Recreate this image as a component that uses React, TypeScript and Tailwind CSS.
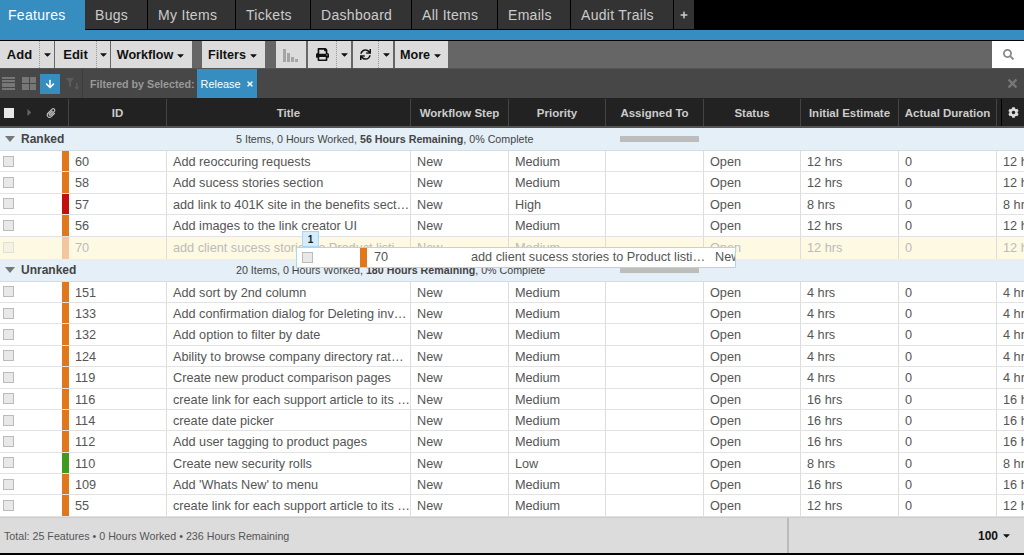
import { FaCaretDown, FaCog, FaPaperclip, FaPlus, FaPrint, FaSearch, FaSync, FaTimes, FaCaretRight, FaArrowDown } from 'react-icons/fa';

const tabs = [
  { label: 'Bugs', w: 'w-[63px]' },
  { label: 'My Items', w: 'w-[88px]' },
  { label: 'Tickets', w: 'w-[75px]' },
  { label: 'Dashboard', w: 'w-[101px]' },
  { label: 'All Items', w: 'w-[86px]' },
  { label: 'Emails', w: 'w-[73px]' },
  { label: 'Audit Trails', w: 'w-[103px]' },
];

const columns = 'grid grid-cols-[62px_7px_98px_244px_98px_97px_98px_97px_98px_98px_98px]';

interface Row {
  id: number;
  title: string;
  priority?: string;
  estimate: string;
  color?: string;
}

const ranked: Row[] = [
  { id: 60, title: 'Add reoccuring requests', estimate: '12 hrs' },
  { id: 58, title: 'Add sucess stories section', estimate: '12 hrs' },
  { id: 57, title: 'add link to 401K site in the benefits section of the site', priority: 'High', estimate: '8 hrs', color: 'bg-[#c40f0f]' },
  { id: 56, title: 'Add images to the link creator UI', estimate: '12 hrs' },
];

const unranked: Row[] = [
  { id: 151, title: 'Add sort by 2nd column', estimate: '4 hrs' },
  { id: 133, title: 'Add confirmation dialog for Deleting inventory items', estimate: '4 hrs' },
  { id: 132, title: 'Add option to filter by date', estimate: '4 hrs' },
  { id: 124, title: 'Ability to browse company directory rather than search', estimate: '4 hrs' },
  { id: 119, title: 'Create new product comparison pages', estimate: '4 hrs' },
  { id: 116, title: 'create link for each support article to its own page', estimate: '16 hrs' },
  { id: 114, title: 'create date picker', estimate: '16 hrs' },
  { id: 112, title: 'Add user tagging to product pages', estimate: '16 hrs' },
  { id: 110, title: 'Create new security rolls', priority: 'Low', estimate: '8 hrs', color: 'bg-[#3f9a1e]' },
  { id: 109, title: "Add 'Whats New' to menu", estimate: '16 hrs' },
  { id: 55, title: 'create link for each support article to its own page', estimate: '12 hrs' },
];

function Checkbox() {
  return <span className="block h-[11px] w-[11px] border border-[#bbb] bg-[#e8e8e8]" />;
}

function Cell({ children }: { children: React.ReactNode }) {
  return <div className="truncate border-r border-[#ddd] pl-[6px] leading-[22px]">{children}</div>;
}

function ItemRow({ row }: { row: Row }) {
  return (
    <div className={`${columns} h-[21.4px] border-b border-[#e2e2e2] bg-white`}>
      <div className="flex items-center pl-[3px]"><Checkbox /></div>
      <div className={row.color ?? 'bg-[#e0771a]'} />
      <Cell>{row.id}</Cell>
      <Cell>{row.title}</Cell>
      <Cell>New</Cell>
      <Cell>{row.priority ?? 'Medium'}</Cell>
      <Cell>{''}</Cell>
      <Cell>Open</Cell>
      <Cell>{row.estimate}</Cell>
      <Cell>0</Cell>
      <Cell>{row.estimate}</Cell>
    </div>
  );
}

function GroupRow({ name, items, remaining }: { name: string; items: string; remaining: string }) {
  return (
    <div className="flex h-[23px] items-center border-b border-[#d5dde3] bg-[#e4eff7] text-[#444]">
      <span className="ml-[5px] h-0 w-0 border-x-[5px] border-t-[6px] border-x-transparent border-t-[#777]" />
      <span className="ml-[6px] w-[215px] text-[12px] font-bold">{name}</span>
      <span className="w-[384px] text-[10.7px]">
        {items} Items, 0 Hours Worked, <b>{remaining} Hours Remaining</b>, 0% Complete
      </span>
      <span className="h-[6px] w-[79px] bg-[#bdbdbd]" />
    </div>
  );
}

function ToolButton({ label, w }: { label: string; w: string }) {
  return (
    <div className={`flex ${w} items-center justify-center gap-[2px] bg-[#dcdcdc] pt-px text-[12.6px] font-bold text-[#111]`}>
      {label}
      <FaCaretDown className="text-[11px]" />
    </div>
  );
}

function CaretButton({ w }: { w: string }) {
  return (
    <div className={`flex ${w} items-center justify-center border-l border-dotted border-[#999] bg-[#dcdcdc] text-[#111]`}>
      <FaCaretDown className="text-[11px]" />
    </div>
  );
}

function HeaderCell({ children }: { children: React.ReactNode }) {
  return (
    <div className="flex items-center justify-center border-r border-[#444] pt-[2px] text-[11.5px] font-bold whitespace-nowrap text-[#ccc]">
      {children}
    </div>
  );
}

export default function App() {
  return (
    <div className="flex h-[555px] w-[1024px] flex-col overflow-hidden bg-black font-['Liberation_Sans',Arial,sans-serif] text-[12.7px] text-[#555]">
      {/* Tabs */}
      <div className="flex h-[30px] shrink-0 bg-black text-[14px] tracking-[0.3px] text-[#ccc]">
        <div className="flex w-[85px] items-center bg-[#368dbf] pl-[8px] text-white">Features</div>
        {tabs.map((t) => (
          <div key={t.label} className={`flex ${t.w} mb-px items-center border-r border-black bg-[#333] pt-px pl-[10px]`}>
            {t.label}
          </div>
        ))}
        <div className="mb-px flex w-[20px] items-center justify-center bg-[#333]">
          <FaPlus className="text-[8px]" />
        </div>
      </div>
      <div className="h-[10px] shrink-0 bg-[#368dbf]" />
      <div className="h-px shrink-0 bg-black" />

      {/* Toolbar */}
      <div className="flex h-[27px] shrink-0 bg-[#666]">
        <div className="flex gap-0">
          <div className="flex w-[39px] items-center justify-center bg-[#dcdcdc] text-[13px] font-bold text-[#111]">Add</div>
          <CaretButton w="w-[15px]" />
          <div className="ml-px flex w-[41px] items-center justify-center bg-[#dcdcdc] text-[13px] font-bold text-[#111]">Edit</div>
          <CaretButton w="w-[14px]" />
          <div className="ml-px flex">
            <ToolButton label="Workflow" w="w-[81px]" />
          </div>
        </div>
        <div className="ml-[10px] flex">
          <ToolButton label="Filters" w="w-[63px]" />
        </div>
        <div className="ml-[11px] flex">
          <div className="flex w-[30px] items-center justify-center bg-[#dcdcdc]">
            <svg width="16" height="14" viewBox="0 0 16 14" fill="#a5a5a5">
              <rect x="0" y="1" width="3" height="13" />
              <rect x="4" y="5" width="3" height="9" />
              <rect x="8" y="9" width="3" height="5" />
              <rect x="12" y="11" width="3" height="3" />
            </svg>
          </div>
          <div className="ml-[2px] flex w-[28px] items-center justify-center bg-[#dcdcdc] text-[#111]">
            <FaPrint className="text-[13px]" />
          </div>
          <CaretButton w="w-[15px]" />
          <div className="ml-[2px] flex w-[25px] items-center justify-center bg-[#dcdcdc] text-[#111]">
            <FaSync className="text-[11px]" />
          </div>
          <CaretButton w="w-[15px]" />
          <div className="ml-[2px] flex">
            <ToolButton label="More" w="w-[53px]" />
          </div>
        </div>
        <div className="ml-auto flex w-[32px] items-center justify-center bg-white text-[#888]">
          <FaSearch className="text-[11px]" />
        </div>
      </div>

      {/* Filter bar */}
      <div className="flex h-[31px] shrink-0 items-stretch border-t border-[#555] border-b border-b-[#222] bg-[#474747]">
        <div className="flex w-[83px] items-center border-r border-[#3c3c3c] pl-[2px]">
          <div className="flex h-[13px] w-[13px] flex-col justify-between">
            {[0, 1, 2, 3, 4].map((i) => (
              <span key={i} className="block h-[2px] bg-[#777]" />
            ))}
          </div>
          <div className="ml-[7px] grid h-[13px] w-[14px] grid-cols-2 gap-px">
            {[0, 1, 2, 3].map((i) => (
              <span key={i} className="bg-[#777]" />
            ))}
          </div>
          <div className="ml-[4px] flex h-[20px] w-[20px] items-center justify-center bg-[#368dbf] text-white">
            <FaArrowDown className="text-[10px]" />
          </div>
          <svg className="ml-[6px]" width="13" height="12" viewBox="0 0 13 12" fill="#5c5c5c">
            <path d="M0 0h8L5 4v5L3 8V4zM10 5h1.5v4H13l-2.2 3-2.3-3H10z" />
          </svg>
        </div>
        <div className="ml-[7px] flex items-center pt-px text-[10.7px] font-bold text-[#999]">Filtered by Selected:</div>
        <div className="ml-[2px] flex w-[60px] items-center gap-[5px] bg-[#368dbf] pt-px pl-[4px] text-[10.9px] text-white">
          Release
          <FaTimes className="text-[8px]" />
        </div>
        <div className="ml-auto flex w-[32px] items-center justify-center pl-[9px] text-[#777]">
          <FaTimes className="text-[13px]" />
        </div>
      </div>

      {/* Column headers */}
      <div className={`${columns} h-[29px] shrink-0 border-b-2 border-[#555] bg-[#222]`}>
        <div className="col-span-2 flex items-center border-r border-[#444] pl-[4px] text-[#999]">
          <span className="block h-[10px] w-[10px] bg-[#e8e8e8]" />
          <FaCaretRight className="ml-[10px] text-[11px] text-[#666]" />
          <FaPaperclip className="ml-[11px] text-[10px] text-[#bbb]" />
        </div>
        <HeaderCell>ID</HeaderCell>
        <HeaderCell>Title</HeaderCell>
        <HeaderCell>Workflow Step</HeaderCell>
        <HeaderCell>Priority</HeaderCell>
        <HeaderCell>Assigned To</HeaderCell>
        <HeaderCell>Status</HeaderCell>
        <HeaderCell>Initial Estimate</HeaderCell>
        <HeaderCell>Actual Duration</HeaderCell>
        <div className="ml-[4px] flex w-[23px] items-center justify-center border-l border-black text-[#ddd]">
          <FaCog className="text-[11px]" />
        </div>
      </div>

      {/* Table body */}
      <div className="relative h-[389px] shrink-0 overflow-hidden bg-white">
        <GroupRow name="Ranked" items="5" remaining="56" />
        {ranked.map((r) => (
          <ItemRow key={r.id} row={r} />
        ))}
        <div className={`${columns} h-[22px] bg-[#fdf9e3] text-[#bbb]`}>
          <div className="flex items-center pl-[3px] opacity-40"><Checkbox /></div>
          <div className="bg-[#f4c6a0]" />
          <Cell>70</Cell>
          <Cell>add client sucess stories to Product listing page</Cell>
          <Cell>New</Cell>
          <Cell>Medium</Cell>
          <Cell>{''}</Cell>
          <Cell>Open</Cell>
          <Cell>12 hrs</Cell>
          <Cell>0</Cell>
          <Cell>12 hrs</Cell>
        </div>
        <GroupRow name="Unranked" items="20" remaining="180" />
        {unranked.map((r) => (
          <ItemRow key={r.id} row={r} />
        ))}

        {/* Row being dragged */}
        <div className="absolute top-[103px] left-[302px] flex h-[16px] w-[17px] items-center justify-center border border-[#a8d8f5] bg-[#d4ecfb] text-[10px] font-bold text-[#222]">
          1
        </div>
        <div className="absolute top-[119px] left-[296px] flex h-[21px] w-[440px] items-stretch overflow-hidden border border-[#a8d8f5] bg-white">
          <div className="flex w-[63px] shrink-0 items-center pl-[5px]"><Checkbox /></div>
          <div className="w-[7px] shrink-0 bg-[#e0771a]" />
          <div className="w-[104px] shrink-0 pl-[7px] leading-[19px]">70</div>
          <div className="w-[244px] shrink-0 truncate pr-[8px] leading-[19px]">add client sucess stories to Product listing page</div>
          <div className="shrink-0 leading-[19px]">New</div>
        </div>
      </div>

      {/* Footer */}
      <div className="flex h-[36px] shrink-0 items-center border-t border-[#ccc] bg-[#dcdcdc] text-[10.7px] text-[#555]">
        <div className="flex h-full w-[789px] items-center border-r-2 border-[#bbb] pt-px pl-[4px]">
          Total: 25 Features • 0 Hours Worked • 236 Hours Remaining
        </div>
        <div className="ml-auto flex items-center gap-[3px] pr-[12px] text-[12px] font-bold text-[#111]">
          100
          <FaCaretDown className="text-[11px]" />
        </div>
      </div>
    </div>
  );
}
